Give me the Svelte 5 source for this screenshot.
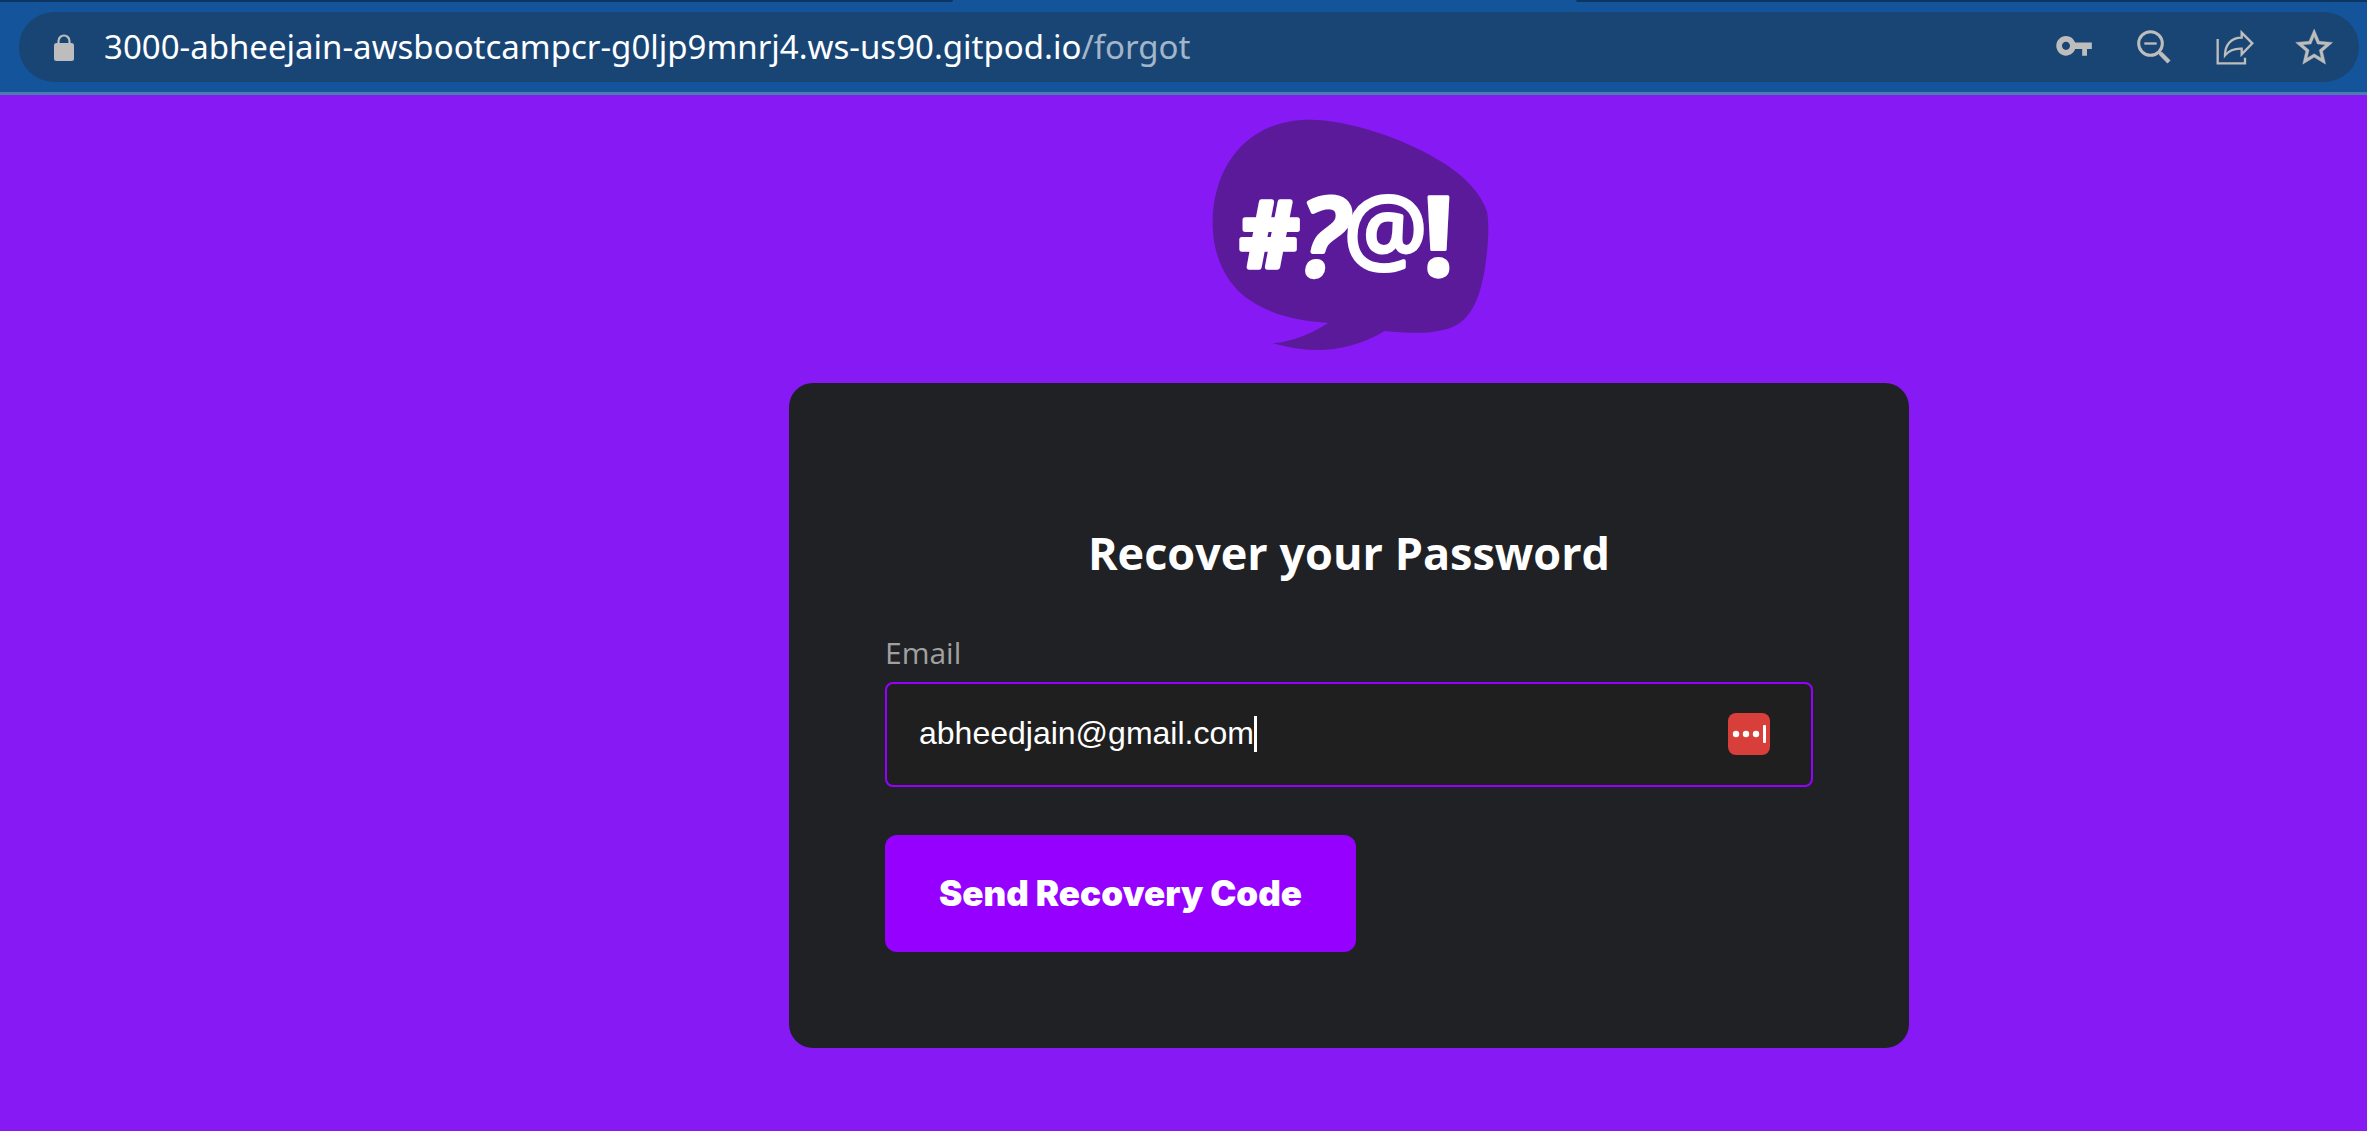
<script>
  let email = $state('abheedjain@gmail.com');
  const host = '3000-abheejain-awsbootcampcr-g0ljp9mnrj4.ws-us90.gitpod.io';
  const path = '/forgot';

  function submit(event) {
    event.preventDefault();
  }
</script>

<div class="window">
  <header class="toolbar">
    <div class="tabs"><span class="tab-left"></span><span class="tab-right"></span></div>
    <div class="omnibox">
      <button class="lock" type="button" aria-label="View site information">
        <svg viewBox="0 0 20 27" aria-hidden="true">
          <path d="M4.5 11V7a5.5 5.5 0 0 1 11 0v4" fill="none" stroke="currentColor" stroke-width="2.2" />
          <rect y="9" width="20" height="18" rx="2.5" fill="currentColor" />
        </svg>
      </button>
      <div class="url" role="textbox" tabindex="0" aria-label="Address" contenteditable="true"><span>{host}</span><span class="path">{path}</span></div>
      <div class="actions">
        <button type="button" aria-label="Manage passwords">
          <svg viewBox="150 69 144 144" aria-hidden="true">
            <path transform="translate(164 78) scale(4.85 4.95)" fill="currentColor" d="M12.65 10C11.83 7.67 9.61 6 7 6c-3.31 0-6 2.69-6 6s2.69 6 6 6c2.61 0 4.83-1.67 5.65-4H17v4h3v-4h3v-4H12.65zM7 14.5c-1.38 0-2.5-1.12-2.5-2.5s1.12-2.5 2.5-2.5 2.5 1.12 2.5 2.5-1.12 2.5-2.5 2.5z" />
          </svg>
        </button>
        <button type="button" aria-label="Zoom">
          <svg viewBox="390 69 144 144" aria-hidden="true" fill="none" stroke="currentColor">
            <circle cx="451.500" cy="130.500" r="35.500" stroke-width="9" />
            <path d="M433 130.500h37" stroke-width="7" />
            <path d="M477 156l5 5" stroke-width="8" />
            <path d="M481 160l26 26" stroke-width="13" />
          </svg>
        </button>
        <button type="button" aria-label="Share this page">
          <svg viewBox="630 69 144 144" aria-hidden="true" fill="none" stroke="currentColor">
            <path d="M653 117V190H735V173" stroke-width="7" />
            <path d="M725 98L757 130L725 163V146C705 145 687 152 675 166C675 136 692 113 725 113Z" stroke-width="7" />
          </svg>
        </button>
        <button type="button" aria-label="Bookmark this page">
          <svg viewBox="870 69 144 144" aria-hidden="true">
            <path transform="translate(875.900 75.900) scale(5.550)" fill="currentColor" stroke="currentColor" stroke-width="0.2" d="M22 9.240l-7.190-.62L12 2 9.190 8.630 2 9.240l5.460 4.730L5.820 21 12 17.270 18.180 21l-1.630-7.030L22 9.240zM12 15.400l-3.760 2.270 1-4.280-3.320-2.880 4.380-.38L12 6.100l1.710 4.040 4.380.38-3.320 2.880 1 4.280L12 15.400z" />
          </svg>
        </button>
      </div>
    </div>
  </header>

  <main class="page">
    <div class="column">
      <svg class="logo" viewBox="-3 0 900 750" role="img" aria-label="Logo">
        <path fill="#5b1a99" d="M38 340C38 170 140 29 330 29C440 29 620 85 740 165C800 205 845 255 861 305C869 345 864 420 853 485C840 555 822 600 790 630C740 675 650 672 554 663C440 730 330 732 218 700C280 695 340 668 385 639C300 631 225 620 150 571C80 525 38 440 38 340Z" />
        <g class="marks">
          <text x="120" y="470" font-size="275" stroke-width="16">#</text>
          <text x="296" y="497" font-size="328" stroke-width="13" class="slanted">?</text>
          <text x="432" y="458" font-size="278" stroke-width="12" class="light">@</text>
          <text x="668" y="497" font-size="328" stroke-width="10">!</text>
        </g>
      </svg>

      <form class="card" onsubmit={submit}>
        <h1>Recover your Password</h1>
        <label for="email">Email</label>
        <div class="field">
          <input id="email" type="text" autocomplete="email" bind:value={email} />
          <span class="caret"></span>
          <button class="vault" type="button" aria-label="Fill from password manager">
            <svg viewBox="0 0 42 42" aria-hidden="true" fill="#fff">
              <circle cx="8" cy="21" r="3.200" />
              <circle cx="18" cy="21" r="3.200" />
              <circle cx="28" cy="21" r="3.200" />
              <rect x="35" y="12" width="3" height="18" rx="1" />
            </svg>
          </button>
        </div>
        <button class="submit" type="submit">Send Recovery Code</button>
      </form>
    </div>
  </main>
</div>

<style>
  :global(body) {
    background: #8719f5;
  }

  .window {
    min-height: 100vh;
    display: flex;
    flex-direction: column;
    font-family: 'Open Sans', 'Noto Sans', sans-serif;
  }

  button {
    margin: 0;
    padding: 0;
    border: 0;
    background: none;
    color: inherit;
    cursor: pointer;
  }

  svg {
    display: block;
    width: 100%;
    height: 100%;
  }

  .toolbar {
    background: #14549a;
    border-bottom: 3px solid #4a7daf;
  }

  .tabs {
    display: flex;
    justify-content: space-between;
    height: 2px;
  }

  .tabs span {
    background: #0d3561;
  }

  .tab-left {
    width: 40.25%;
    border-bottom-right-radius: 2px;
  }

  .tab-right {
    width: 33.4%;
    border-bottom-left-radius: 2px;
  }

  .omnibox {
    display: flex;
    align-items: center;
    height: 70px;
    margin: 10px 8px 10px 19px;
    padding: 0 21px 0 35px;
    border-radius: 35px;
    background: #194575;
    color: #bdbdbd;
  }

  .lock {
    width: 20px;
    height: 27px;
    margin-right: 30px;
  }

  .url {
    flex: 1;
    min-width: 0;
    overflow: hidden;
    white-space: nowrap;
    outline: none;
    color: #fff;
    font-family: 'Noto Sans', 'Open Sans', sans-serif;
    font-size: 33px;
    line-height: 48px;
  }

  .path {
    color: #a3b5c8;
  }

  .actions {
    display: flex;
    gap: 32px;
  }

  .actions button {
    width: 48px;
    height: 48px;
  }

  .page {
    flex: 1;
    padding: 15px 24px 64px calc(100% / 3);
  }

  .column {
    display: flex;
    flex-direction: column;
    align-items: center;
    max-width: 1120px;
  }

  .logo {
    width: 300px;
    height: 250px;
  }

  .marks {
    fill: #fff;
    stroke: #fff;
    stroke-linejoin: round;
    font-weight: 700;
  }

  .slanted {
    font-style: italic;
    font-weight: 600;
  }

  .light {
    font-weight: 500;
  }

  .card {
    box-sizing: border-box;
    display: flex;
    flex-direction: column;
    align-items: flex-start;
    width: 100%;
    margin-top: 23px;
    padding: 140px 96px 96px;
    border-radius: 24px;
    background: #202124;
  }

  h1 {
    align-self: center;
    margin: 0 0 50px;
    color: #fff;
    font-size: 45px;
    font-weight: 700;
    line-height: 60px;
  }

  label {
    margin-bottom: 9px;
    color: #a0a0a0;
    font-size: 30px;
    line-height: 40px;
  }

  .field {
    box-sizing: border-box;
    display: flex;
    align-items: center;
    width: 100%;
    height: 105px;
    padding: 0 41px 2px 32px;
    border: 2px solid #9500ff;
    border-radius: 8px;
    background: #1f1f1f;
  }

  input {
    field-sizing: content;
    min-width: 0;
    padding: 0;
    border: 0;
    outline: none;
    background: none;
    color: #fff;
    caret-color: transparent;
    font-family: 'Liberation Sans', Arial, sans-serif;
    font-size: 32px;
    line-height: 37px;
  }

  .caret {
    width: 3px;
    height: 36px;
    background: #fff;
  }

  .vault {
    width: 42px;
    height: 42px;
    margin-left: auto;
    border-radius: 8px;
    background: #d93f3a;
  }

  .submit {
    margin-top: 48px;
    padding: 36px 54px;
    border-radius: 12px;
    background: #9500ff;
    color: #fff;
    font-family: Inter, sans-serif;
    font-size: 35px;
    font-weight: 900;
    line-height: 45px;
  }
</style>
